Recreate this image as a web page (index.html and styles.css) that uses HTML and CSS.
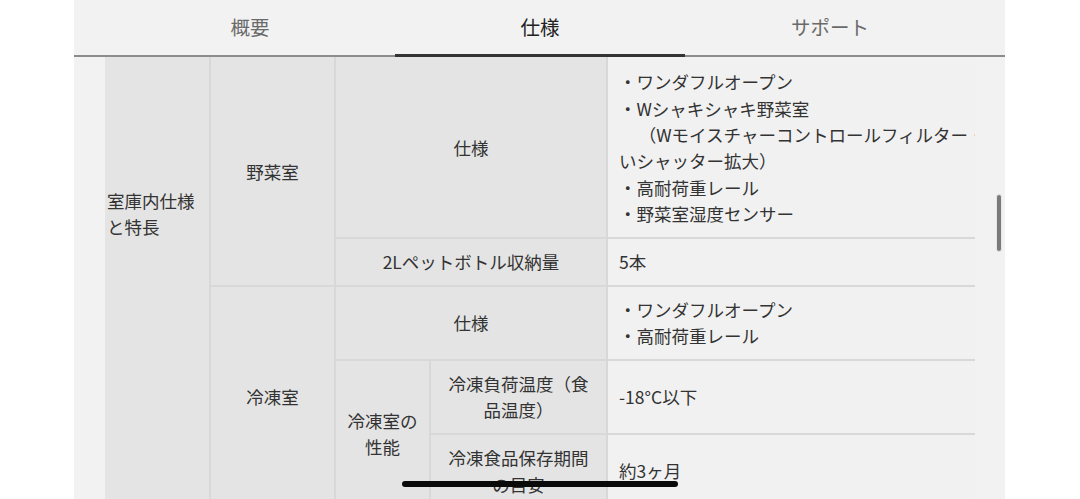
FILE: index.html
```html
<!DOCTYPE html>
<html lang="ja">
<head>
<meta charset="utf-8">
<title>仕様</title>
<link rel="stylesheet" href="styles.css">
</head>
<body>
<div class="page">
  <nav class="tabs">
    <div class="tab">概要</div>
    <div class="tab active">仕様</div>
    <div class="tab">サポート</div>
  </nav>
  <div class="spec">
    <div class="scroller">
      <table class="spec-table">
        <colgroup>
          <col class="c1"><col class="c2"><col class="c3a"><col class="c3b"><col class="c4">
        </colgroup>
        <tr>
          <th class="group" rowspan="5">室庫内仕様<br>と特長</th>
          <th class="sub" rowspan="2">野菜室</th>
          <th class="label" colspan="2">仕様</th>
          <td class="value">・ワンダフルオープン<br>・Wシャキシャキ野菜室<br><span class="indent">　（Wモイスチャーコントロールフィルター・</span><br>いシャッター拡大）<br>・高耐荷重レール<br>・野菜室湿度センサー</td>
        </tr>
        <tr>
          <th class="label" colspan="2">2Lペットボトル収納量</th>
          <td class="value">5本</td>
        </tr>
        <tr>
          <th class="sub" rowspan="3">冷凍室</th>
          <th class="label" colspan="2">仕様</th>
          <td class="value">・ワンダフルオープン<br>・高耐荷重レール</td>
        </tr>
        <tr>
          <th class="label" rowspan="2">冷凍室の<br>性能</th>
          <th class="label">冷凍負荷温度（食<br>品温度）</th>
          <td class="value">-18°C以下</td>
        </tr>
        <tr>
          <th class="label">冷凍食品保存期間<br>の目安</th>
          <td class="value">約3ヶ月</td>
        </tr>
      </table>
    </div>
  </div>
  <div class="scrollbar"></div>
</div>
<div class="home-indicator"></div>
</body>
</html>
```
FILE: styles.css
```css
* { box-sizing: border-box; }
html, body { margin: 0; padding: 0; }
body {
  background: #ffffff;
  font-family: "Noto Sans CJK JP", "Noto Sans", sans-serif;
  color: #333333;
  overflow: hidden;
  height: 499px;
}
.page {
  position: relative;
  margin-left: 74px;
  width: 931px;
  min-height: 499px;
  background: #f2f2f2;
}
.tabs {
  display: flex;
  padding: 0 30px 0 31px;
  height: 57px;
  border-bottom: 2px solid #8c8c8c;
}
.tab {
  position: relative;
  flex: 0 0 290px;
  display: flex;
  align-items: center;
  justify-content: center;
  font-size: 19.5px;
  color: #6a6a6a;
  padding-bottom: 2px;
}
.tab.active { color: #222222; }
.tab.active::after {
  content: "";
  position: absolute;
  left: 0;
  right: 0;
  bottom: -2px;
  height: 3px;
  background: #333333;
}
.spec {
  padding: 0 30px 0 31px;
}
.scroller {
  width: 870px;
  overflow: hidden;
}
.spec-table {
  border-collapse: collapse;
  table-layout: fixed;
  width: 1000px;
  font-size: 17.5px;
  line-height: 26.4px;
}
.c1 { width: 105px; }
.c2 { width: 125px; }
.c3a { width: 95px; }
.c3b { width: 177px; }
.c4 { width: 498px; }
.spec-table th,
.spec-table td {
  border: 2px solid #d8d8d8;
  padding: 9.7px 10px;
  font-weight: normal;
  vertical-align: middle;
}
.spec-table tr:first-child th,
.spec-table tr:first-child td { border-top: none; padding-top: 12.2px; }
.spec-table th {
  background: #e4e4e4;
  text-align: center;
  color: #333333;
}
.spec-table tr:first-child th.group {
  border-left: none;
  text-align: left;
  vertical-align: top;
  padding: 131px 0 0 2px;
}
.spec-table td.value {
  background: #f1f1f1;
  text-align: left;
  white-space: nowrap;
  padding-left: 11px;
}
.indent {
  padding-left: 11px;
}
.scrollbar {
  position: absolute;
  left: 922px;
  top: 194px;
  width: 6px;
  height: 58px;
  border-radius: 3px;
  background: #7a7a7a;
  border: 1px solid #e6e6e6;
}
.home-indicator {
  position: fixed;
  left: 402px;
  top: 481px;
  width: 276px;
  height: 6px;
  border-radius: 3px;
  background: #0a0a0a;
}
```
